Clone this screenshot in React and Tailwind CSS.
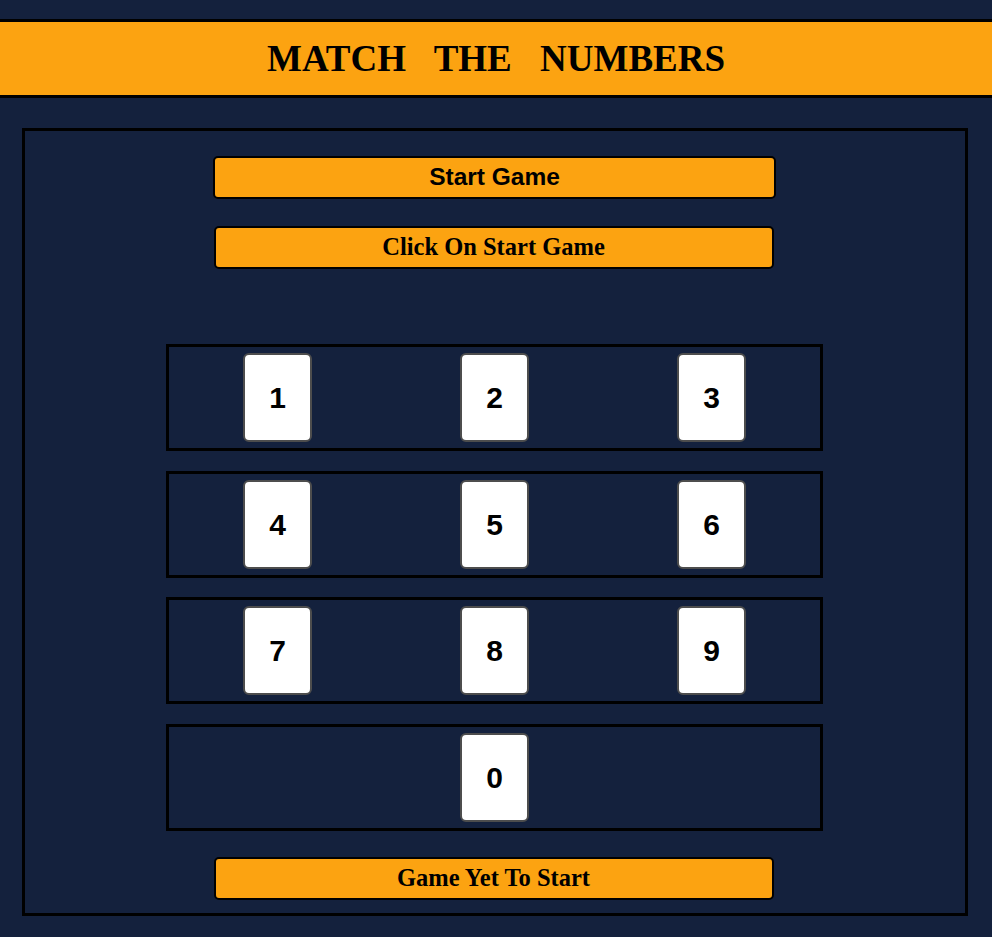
import React from 'react';

const rows = [[1, 2, 3], [4, 5, 6], [7, 8, 9], [0]];

function Card({ value }) {
    return (
        <div className="w-[69px] h-[89px] flex items-center justify-center bg-white border-2 border-[#4d4d4d] rounded-[6px] text-[30px] font-bold text-black font-['Liberation_Sans',Arial,sans-serif]">
            {value}
        </div>
    );
}

export default function App() {
    return (
        <div className="min-h-screen bg-[#14213d] pt-[19px] pb-[21px] font-['Liberation_Serif','Times_New_Roman',serif]">
            {/* Header */}
            <header className="h-[79px] flex items-center justify-center bg-[#fca311] border-y-[3px] border-black">
                <h1 className="text-[37px] font-bold text-black [word-spacing:19px] leading-none">
                    MATCH THE NUMBERS
                </h1>
            </header>

            {/* Game board */}
            <main className="mt-[30px] ml-[22px] w-[946px] h-[788px] border-[3px] border-black flex flex-col items-center pt-[25px]">
                <button className="w-[563px] h-[43px] ml-[-1px] bg-[#fca311] border-2 border-black rounded-[5px] text-[24.5px] font-bold text-black font-['Liberation_Sans',Arial,sans-serif]">
                    Start Game
                </button>
                <div className="mt-[27px] w-[560px] h-[43px] ml-[-3px] flex items-center justify-center bg-[#fca311] border-2 border-black rounded-[5px] text-[24.5px] font-bold text-black">
                    Click On Start Game
                </div>

                <div className="mt-[75px] w-[657px] ml-[-1px] flex flex-col gap-[19.5px]">
                    {rows.map((row, i) => (
                        <div key={i} className="h-[107px] border-[3px] border-black flex items-center">
                            {row.length === 1 ? (
                                <div className="w-full flex justify-center">
                                    <Card value={row[0]} />
                                </div>
                            ) : (
                                row.map((n) => (
                                    <div key={n} className="flex-1 flex justify-center">
                                        <Card value={n} />
                                    </div>
                                ))
                            )}
                        </div>
                    ))}
                </div>

                <div className="mt-[26px] w-[560px] h-[43px] ml-[-3px] flex items-center justify-center bg-[#fca311] border-2 border-black rounded-[5px] text-[24.5px] font-bold text-black">
                    Game Yet To Start
                </div>
            </main>
        </div>
    );
}
